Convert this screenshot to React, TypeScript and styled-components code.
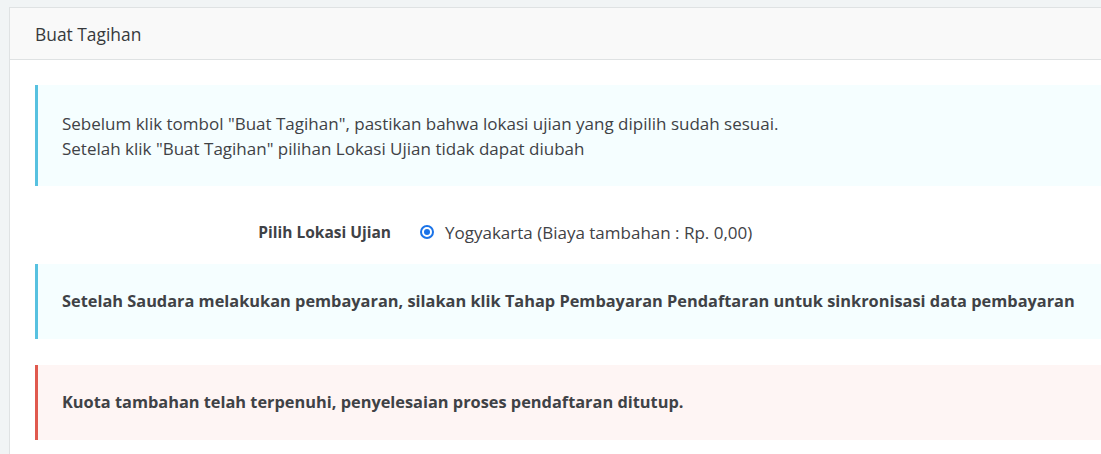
import styled, { createGlobalStyle } from 'styled-components'

const GlobalStyle = createGlobalStyle`
  html, body {
    margin: 0;
    padding: 0;
    background: #f1f4f5;
    font-family: "Open Sans", "Noto Sans", sans-serif;
    font-size: 17px;
    color: #3f4246;
  }
`

const Page = styled.div`
  padding: 7px 0 0 9px;
  overflow: hidden;
  height: 454px;
  box-sizing: border-box;
`

const Panel = styled.section`
  width: 1160px;
  background: #fff;
  border: 1px solid #dfe2e3;
  border-right: none;
`

const PanelHeading = styled.header`
  display: flex;
  align-items: center;
  height: 51px;
  padding: 0 25px;
  background: #f9f9f9;
  border-bottom: 1px solid #dfe2e3;
`

const PanelTitle = styled.h3`
  margin: 0;
  font-size: 17.4px;
  font-weight: 400;
  color: #37393c;
`

const PanelBody = styled.div`
  display: flex;
  flex-direction: column;
  padding: 25px 0 25px 25px;
`

const Callout = styled.div<{ $tone: 'info' | 'danger' }>`
  padding: 25px 24px;
  border-left: 3px solid ${(p) => (p.$tone === 'danger' ? '#e0594e' : '#57c1e0')};
  background: ${(p) => (p.$tone === 'danger' ? '#fef5f4' : '#f5feff')};
  line-height: 25px;

  &:first-child {
    padding-top: 26px;
  }

  & + & {
    margin-top: 26px;
  }

  p {
    margin: 0;
  }
`

const Strong = styled.p`
  font-size: 16.35px;
  font-weight: 700;
`

const FormRow = styled.div`
  display: grid;
  grid-template-columns: 356px 1fr;
  column-gap: 29px;
  align-items: center;
  box-sizing: border-box;
  height: 78px;
  padding-top: 14px;
`

const FieldLabel = styled.label`
  text-align: right;
  font-size: 15.5px;
  font-weight: 700;
`

const RadioOption = styled.label`
  display: flex;
  align-items: center;
  gap: 11px;
`

const RadioDot = styled.span`
  width: 14px;
  height: 14px;
  box-sizing: border-box;
  border-radius: 50%;
  border: 2px solid #1a73e8;
  display: flex;
  align-items: center;
  justify-content: center;

  &::after {
    content: '';
    width: 6px;
    height: 6px;
    border-radius: 50%;
    background: #1a73e8;
  }
`

export default function App() {
  return (
    <>
      <GlobalStyle />
      <Page>
        <Panel>
          <PanelHeading>
            <PanelTitle>Buat Tagihan</PanelTitle>
          </PanelHeading>
          <PanelBody>
            <Callout $tone="info">
              <p>
                Sebelum klik tombol "Buat Tagihan", pastikan bahwa lokasi ujian yang dipilih sudah
                sesuai.
              </p>
              <p>Setelah klik "Buat Tagihan" pilihan Lokasi Ujian tidak dapat diubah</p>
            </Callout>

            <FormRow>
              <FieldLabel>Pilih Lokasi Ujian</FieldLabel>
              <RadioOption>
                <RadioDot />
                Yogyakarta (Biaya tambahan : Rp. 0,00)
              </RadioOption>
            </FormRow>

            <Callout $tone="info">
              <Strong>
                Setelah Saudara melakukan pembayaran, silakan klik Tahap Pembayaran Pendaftaran untuk
                sinkronisasi data pembayaran
              </Strong>
            </Callout>

            <Callout $tone="danger">
              <Strong>Kuota tambahan telah terpenuhi, penyelesaian proses pendaftaran ditutup.</Strong>
            </Callout>
          </PanelBody>
        </Panel>
      </Page>
    </>
  )
}
